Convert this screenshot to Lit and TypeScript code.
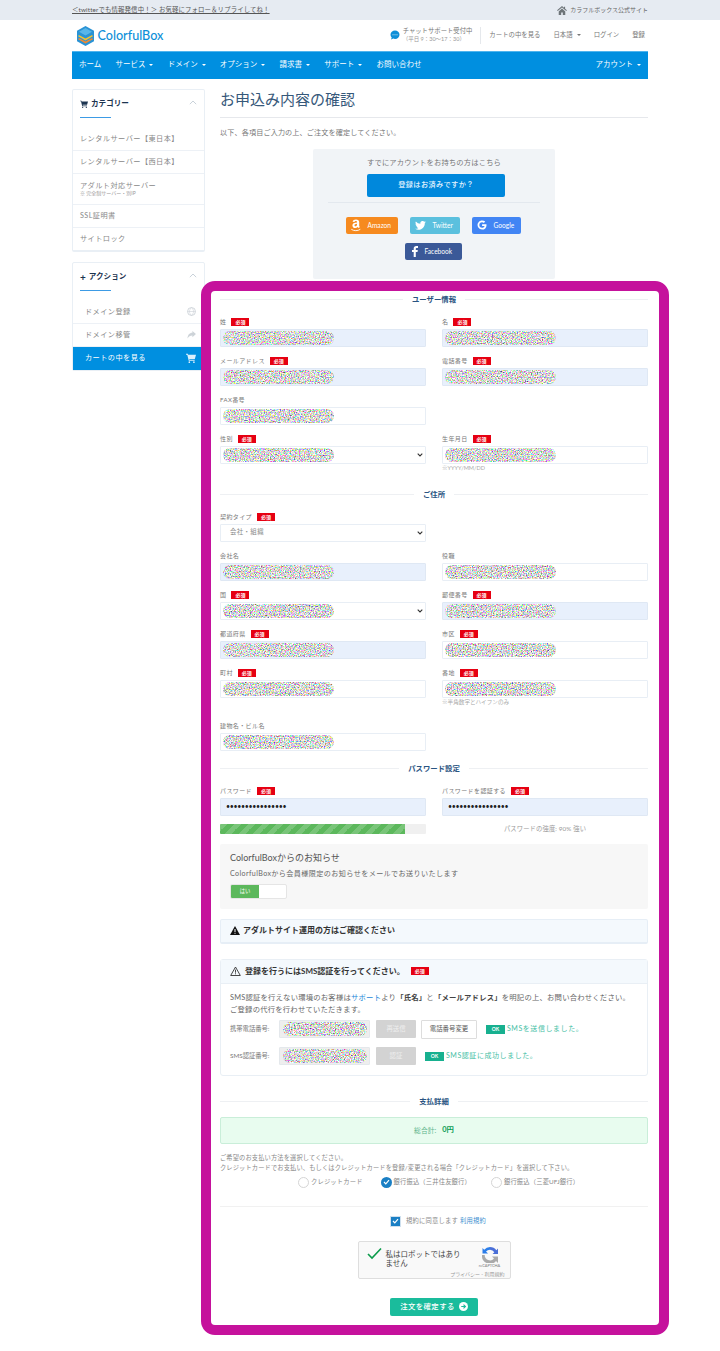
import { LitElement, html, css } from "lit";
import { customElement } from "lit/decorators.js";

const blob = (w = 111, h = 14, seed = 1) => html`<svg class="blob" width=${w} height=${h} viewBox="0 0 ${w} ${h}" aria-hidden="true">
  <defs><filter id="nz${seed}" x="0" y="0" width="100%" height="100%" color-interpolation-filters="sRGB">
    <feTurbulence type="fractalNoise" baseFrequency="0.8" numOctaves="2" seed=${seed} result="n"></feTurbulence>
    <feColorMatrix in="n" type="matrix" values="1.9 0 0 0 -0.1  0 1.9 0 0 -0.1  0 0 1.9 0 -0.1  0 0 0 0 1"></feColorMatrix>
    <feGaussianBlur stdDeviation="0.4"></feGaussianBlur>
    <feComposite in2="SourceAlpha" operator="in"></feComposite>
  </filter></defs>
  <rect width=${w} height=${h} rx=${h / 2} fill="#000" filter="url(#nz${seed})"></rect>
</svg>`;

const chev = html`<svg class="chev" width="6" height="4" viewBox="0 0 6 4"><path d="M.7.7 3 3 5.3.7" fill="none" stroke="#333" stroke-width="1.1"/></svg>`;
const cart = (c: string, s = 9) => html`<svg width=${s} height=${s} viewBox="0 0 12 12"><path fill=${c} d="M0 1h2.2l.4 1.2H12l-1.4 5H3.9l.3 1H10.4v1H3.3L1.5 2H0zM4 10a1 1 0 1 1 0 2 1 1 0 0 1 0-2zm5.500 0a1 1 0 1 1 0 2 1 1 0 0 1 0-2z"/></svg>`;
const up = html`<svg class="up" width="8" height="5" viewBox="0 0 8 5"><path d="M.8 4.200 4 1l3.200 3.200" fill="none" stroke="#c9d2da" stroke-width="1"/></svg>`;

let seedN = 0;
type F = { label?: string; req?: boolean; bg?: "blue" | "white"; select?: boolean; text?: string; help?: string; tall?: boolean; dots?: boolean };
const field = (f: F) => html`<div class="field">
  <div class="lab"><span>${f.label}</span>${f.req ? html`<b class="req">必須</b>` : ""}</div>
  <div class="inp ${f.bg === "blue" ? "blue" : ""}">
    ${f.dots ? html`<span class="dots">••••••••••••••••</span>` : f.text ? html`<span class="seltext">${f.text}</span>` : blob(111, 14, ++seedN)}
    ${f.select ? chev : ""}
  </div>
  ${f.help ? html`<div class="help ${f.tall ? "tall" : ""}">${f.help}</div>` : ""}
</div>`;

@customElement("app-root")
export class AppRoot extends LitElement {
  static styles = css`
    :host { display: block; width: 720px; min-height: 1351px; position: relative; background: #fff; overflow: hidden;
      font-family: Lato, "Noto Sans CJK JP", sans-serif; color: #777; font-size: 7.5px; line-height: 1.3; }
    a { color: inherit; text-decoration: none; }
    .top { height: 20px; background: #e6ebf2; }
    .wrap { width: 576px; margin: 0 auto; }
    .top .wrap { height: 20px; display: flex; justify-content: space-between; align-items: center; }
    .tw { color: #555; font-size: 6.4px; text-decoration: underline; letter-spacing: .02em; }
    .off { display: flex; align-items: center; gap: 3px; font-size: 6px; color: #666; }
    .head { height: 30px; display: flex; align-items: center; position: relative; }
    .logo { display: flex; align-items: center; gap: 3.5px; margin-left: 5px; color: #0d8fd8; font-size: 12.6px; font-weight: 500; font-family: Lato, sans-serif; padding-top: 2px; }
    .hr { margin-left: auto; display: flex; align-items: center; color: #777; font-size: 6.4px; }
    .chat { display: flex; gap: 3px; align-items: center; }
    .chat small { display: block; font-size: 5.5px; color: #999; }
    .chat div { font-size: 6.35px; line-height: 8px; }
    .vline { width: 1px; height: 17px; background: #e5e8ec; margin: 0 8px; }
    .hl { margin-right: 13px; display: flex; align-items: center; gap: 2px; }
    .hl:last-child { margin-right: 3px; }
    .tri { width: 0; height: 0; border-left: 2px solid transparent; border-right: 2px solid transparent; border-top: 2.5px solid currentColor; margin-left: 2px; display: inline-block; }
    nav { height: 27.5px; margin-top: 1px; background: #008fe0; border-top: 1px solid #4fb4ee; box-sizing: border-box; color: #fff; display: flex; align-items: center; padding: 0 7px; font-size: 7.5px; }
    nav a { margin-right: 14.2px; display: flex; align-items: center; gap: 2px; }
    nav .acct { margin: 0 0 0 auto; }
    .main { display: flex; gap: 15px; padding-top: 10px; align-items: flex-start; }
    aside { width: 133px; flex: none; }
    .card { border: 1px solid #e9eff5; border-bottom-width: 2px; border-radius: 2px; background: #fff; margin-bottom: 10px; box-sizing: border-box; }
    .card h3 { margin: 0; height: 27px; padding: 1px 7px 0; box-sizing: border-box; font-size: 7.6px; font-weight: 700; color: #1c3450; display: flex; align-items: center; gap: 3px; position: relative; }
    .card h3 .up { position: absolute; right: 7px; top: 10px; }
    .plus { font-size: 10px; line-height: 10px; }
    .uline { width: 31px; height: 1px; background: #3d9be5; margin-left: 7px; }
    .items { margin-top: 10px; }
    .it { padding: 0 7px; height: 23px; display: flex; align-items: center; border-bottom: 1px solid #edf1f6; box-sizing: border-box; letter-spacing: .06em; color: #888; font-size: 7.2px; }
    .it:last-child { border-bottom: 0; height: 22px; }
    .it.tall { height: 31px; flex-direction: column; align-items: flex-start; justify-content: center; }
    .it.tall small { font-size: 5px; color: #999; letter-spacing: 0; }
    .acts { border-bottom-width: 1px; }
    .acts .it { justify-content: space-between; padding: 0 8px 0 12px; }
    .acts .it.on { background: #008fe0; color: #fff; height: 23px; border: 0; }
    .content { flex: 1; min-width: 0; }
    h1 { margin: 0; font-weight: 400; font-size: 15px; line-height: 20px; height: 29px; box-sizing: border-box; color: #36587a; border-bottom: 1px solid #e6e8ec; }
    .lead { margin-top: 9px; height: 11px; line-height: 11px; font-size: 7.1px; color: #777; letter-spacing: .02em; }
    .login { margin: 11px auto 0; width: 242px; height: 130px; background: #f1f4f7; border-radius: 2px; display: flex; flex-direction: column; align-items: center; padding-top: 8px; box-sizing: border-box; }
    .login p { margin: 0; font-size: 7.3px; height: 11px; line-height: 11px; color: #777; letter-spacing: .02em; }
    .bluebtn { margin: 6px 0 0 4px; width: 138px; height: 23px; background: #0088dc; border-radius: 2px; color: #e6f4ff; font-size: 7.2px; display: flex; align-items: center; justify-content: center; font-weight: 500; letter-spacing: .05em; }
    .login hr { width: 212px; border: 0; height: 1px; background: #e3e8ee; margin: 5px 0 0; }
    .soc { display: flex; gap: 12px; margin: 14px 0 0 -2px; justify-content: center; }
    .soc + .soc { margin-top: 9px; }
    .sb { height: 17px; border-radius: 2px; color: #fff; font-size: 6.6px; display: flex; align-items: center; box-sizing: border-box; padding-left: 5px; gap: 7px; }
    .amz { width: 52px; background: #f68a1f; } .twt { width: 50px; background: #5bc0de; } .goo { width: 49px; background: #4285f4; } .fb { width: 57px; background: #3b5998; padding-left: 7px; }
    .sec { display: flex; align-items: center; gap: 9px; height: 12px; font-size: 7.4px; font-weight: 700; color: #2a5482; margin-top: 15px; }
    .sec::before, .sec::after { content: ""; flex: 1; height: 1px; background: #eef0f3; }
    .m17 { margin-top: 17px; } .m12 { margin-top: 12px; } .m20 { margin-top: 20px; }
    .grid { display: grid; grid-template-columns: 206px 206px; column-gap: 16px; row-gap: 10px; margin-top: 12px; }
    .lab { height: 11px; display: flex; align-items: flex-start; gap: 5px; font-size: 6px; letter-spacing: .4px; color: #777; line-height: 8px; }
    .req { display: inline-flex; align-items: center; justify-content: center; width: 18px; height: 8px; background: #e60012; color: #fff; font-size: 5px; font-weight: 700; letter-spacing: 0; }
    .inp { height: 18px; border: 1px solid #e8eef5; border-radius: 1px; box-sizing: border-box; padding-left: 2px; display: flex; align-items: center; justify-content: space-between; background: #fff; }
    .inp.blue { background: #e8f0fc; border-color: #dfe8f4; }
    .blob { display: block; flex: none; }
    .chev { margin-right: 2px; }
    .dots { color: #222; font-size: 7px; letter-spacing: -.3px; margin-left: 3px; }
    .seltext { margin-left: 7px; font-size: 6.4px; color: #888; letter-spacing: .4px; }
    .help { height: 8px; line-height: 8px; font-size: 5.6px; color: #aaa; }
    .help.tall { height: 14px; }
    .bar { display: grid; grid-template-columns: 206px 206px; column-gap: 16px; margin-top: 8px; height: 10px; }
    .track { background: #f0f0f0; border-radius: 1px; overflow: hidden; }
    .fill { width: 90%; height: 100%; background-color: #5cb85c; background-image: linear-gradient(135deg, rgba(255,255,255,.18) 25%, transparent 25%, transparent 50%, rgba(255,255,255,.18) 50%, rgba(255,255,255,.18) 75%, transparent 75%); background-size: 14px 14px; }
    .strength { text-align: center; font-size: 6.3px; line-height: 10px; color: #999; letter-spacing: .02em; }
    .notice { margin-top: 10px; height: 65px; background: #f7f7f7; padding: 8px 10px 0; box-sizing: border-box; border-radius: 2px; }
    .notice h4 { margin: 0; font-size: 9px; line-height: 11px; font-weight: 400; color: #555; }
    .notice p { margin: 5px 0 0; font-size: 7.1px; line-height: 11px; color: #666; letter-spacing: .4px; }
    .tog { margin-top: 5px; width: 57px; height: 15px; border: 1px solid #e5e5e5; box-sizing: border-box; border-radius: 2px; background: #fff; overflow: hidden; }
    .tog span { display: flex; width: 28px; height: 100%; background: #5cb85c; color: #fff; font-size: 5.3px; align-items: center; justify-content: center; }
    .alert { margin-top: 10px; height: 25px; background: #f4f9fd; border: 1px solid #e6eef6; border-bottom-width: 2px; box-sizing: border-box; display: flex; align-items: center; gap: 3px; padding-left: 9px; font-size: 8px; font-weight: 700; color: #333; border-radius: 2px; }
    .sms { margin-top: 15px; height: 117px; border: 1px solid #e9eff5; border-radius: 3px; box-sizing: border-box; }
    .smsh { height: 24px; background: #f4f9fd; border-bottom: 1px solid #e9eff5; display: flex; align-items: center; gap: 4px; padding-left: 9px; font-size: 8px; font-weight: 700; color: #333; box-sizing: border-box; }
    .smsh .req { margin-left: 2px; }
    .smsb { padding: 8px 9px 0; }
    .smsb p { margin: 0; font-size: 7.35px; line-height: 12px; color: #666; letter-spacing: .2px; }
    .smsb p a { color: #1d87d8; }
    .smsb p b { color: #444; }
    .srow { display: flex; align-items: center; height: 19px; margin-top: 4px; }
    .srow + .srow { margin-top: 8px; }
    .srow > label { width: 49px; font-size: 6.3px; color: #777; flex: none; }
    .gi { width: 91px; height: 18px; background: #eee; border: 1px solid #e4e8ec; border-radius: 1px; box-sizing: border-box; display: flex; align-items: center; justify-content: center; margin-right: 6px; flex: none; }
    .gb { width: 40px; height: 18px; background: #d3d3d3; color: #eee; font-size: 6.4px; display: flex; align-items: center; justify-content: center; border-radius: 1px; flex: none; }
    .wb { width: 56px; height: 19px; background: #fff; border: 1px solid #ddd; box-sizing: border-box; color: #555; font-size: 6.4px; display: flex; align-items: center; justify-content: center; margin-left: 5px; border-radius: 1px; flex: none; }
    .ok { width: 19px; height: 9px; background: #17b08f; color: #fff; font-size: 5px; font-weight: 700; display: flex; align-items: center; justify-content: center; margin-left: 9px; margin-right: 2px; flex: none; }
    .oktxt { color: #45c0a5; font-size: 7px; letter-spacing: .08em; white-space: nowrap; }
    .green { margin-top: 9px; height: 27px; background: #e8fcef; border: 1px solid #c9eed9; border-radius: 2px; box-sizing: border-box; display: flex; align-items: center; justify-content: center; gap: 6px; font-size: 6.8px; color: #5db58b; }
    .green b { color: #0e9c55; font-size: 7.4px; }
    .pay { margin-top: 9px; font-size: 6.25px; line-height: 10px; color: #888; letter-spacing: .02em; }
    .radios { margin-top: 3px; height: 13px; display: flex; align-items: center; font-size: 6.3px; color: #888; letter-spacing: .15px; padding-left: 78px; }
    .radio { width: 11px; height: 11px; border-radius: 50%; border: 1px solid #d5d5d5; box-sizing: border-box; margin-right: 2px; background: #fff; flex: none; }
    .radio.on { background: #1a7fc4; border: 0; display: flex; align-items: center; justify-content: center; }
    .r2 { margin-left: 18px; } .r3 { margin-left: 20px; }
    .sep { height: 1px; background: #f1f1f1; margin-top: 17px; }
    .agree { margin-top: 9px; height: 11px; display: flex; align-items: center; justify-content: center; gap: 5px; font-size: 6.3px; color: #888; letter-spacing: .2px; padding-left: 8px; }
    .agree a { color: #3b8fd0; }
    .cb { width: 11px; height: 11px; background: #1a7fc4; border: 1px solid #cfe0ee; box-sizing: border-box; display: flex; align-items: center; justify-content: center; }
    .cap { margin: 14px auto 0; width: 153px; height: 38px; background: #f9f9f9; border: 1px solid #dedede; border-radius: 2px; box-sizing: border-box; display: flex; position: relative; padding: 5px 0 0 8px; }
    .cap .msg { margin-left: 4px; width: 76px; font-size: 7.5px; line-height: 9px; color: #444; padding-top: 3px; }
    .cap .logo2 { position: absolute; right: 5px; top: 5px; display: flex; flex-direction: column; align-items: center; font-size: 3.9px; color: #777; line-height: 5px; width: 30px; }
    .cap .priv { position: absolute; right: 5px; bottom: 1px; font-size: 5px; color: #999; line-height: 6px; white-space: nowrap; }
    .go { margin: 19px auto 0; width: 88px; height: 18px; background: #1abc9c; color: #fff; border-radius: 2px; display: flex; align-items: center; justify-content: center; gap: 4px; font-size: 7.4px; letter-spacing: .05em; font-weight: 500; }
    .frame { position: absolute; left: 201px; top: 281px; width: 468px; height: 1054px; box-sizing: border-box; border: 10px solid #c5129c; border-radius: 14px; pointer-events: none; }
  `;

  render() {
    seedN = 0;
    const f = field;
    const tick = html`<svg width="7" height="6" viewBox="0 0 7 6"><path d="M1 3l1.800 1.800L6 1.200" fill="none" stroke="#fff" stroke-width="1.200"/></svg>`;
    return html`
      <div class="top"><div class="wrap">
        <a class="tw">＜twitterでも情報発信中！＞ お気軽にフォロー＆リプライしてね！</a>
        <span class="off"><svg width="10" height="9" viewBox="0 0 12 11"><path fill="#6d7478" d="M6 0 0 5.300l.8.9L6 1.700l5.200 4.500.8-.9L9.800 3.400V.8H8.400v1.400zM2 6.600V11h3V8h2v3h3V6.600L6 3z"/></svg>カラフルボックス公式サイト</span>
      </div></div>
      <div class="wrap">
        <header class="head">
          <div class="logo">
            <svg width="17" height="20" viewBox="0 0 17 20"><path fill="#2a93d5" d="M8.500 0 17 4.800v10.400L8.500 20 0 15.200V4.800z"/><path fill="#58b6e8" d="M8.500 2 15 5.800 8.500 9.500 2 5.800z"/><path fill="none" stroke="#f2c230" stroke-width="1.600" d="M1.500 9.600 8.500 13.500l7-3.900"/><path fill="none" stroke="#f28a30" stroke-width="1.600" d="M1.500 12.600l7 3.900 7-3.900"/></svg>
            ColorfulBox
          </div>
          <div class="hr">
            <div class="chat"><svg width="10" height="10" viewBox="0 0 10 10"><path fill="#0d8fd8" d="M5 .5a4.500 4.200 0 0 1 0 8.400c-.6 0-1.200-.1-1.700-.3L1 9.600l.7-2A4.200 4.200 0 0 1 .5 4.700 4.500 4.200 0 0 1 5 .5z"/><circle cx="3" cy="4.700" r=".5" fill="#fff"/><circle cx="5" cy="4.700" r=".5" fill="#fff"/><circle cx="7" cy="4.700" r=".5" fill="#fff"/></svg>
              <div>チャットサポート受付中<small>（平日 9：30～17：30）</small></div></div>
            <span class="vline"></span>
            <a class="hl">カートの中を見る</a><a class="hl">日本語<i class="tri"></i></a><a class="hl">ログイン</a><a class="hl">登録</a>
          </div>
        </header>
        <nav>
          <a>ホーム</a><a>サービス<i class="tri"></i></a><a>ドメイン<i class="tri"></i></a><a>オプション<i class="tri"></i></a><a>請求書<i class="tri"></i></a><a>サポート<i class="tri"></i></a><a>お問い合わせ</a>
          <a class="acct">アカウント<i class="tri"></i></a>
        </nav>
        <div class="main">
          <aside>
            <section class="card">
              <h3>${cart("#1c3450", 8)}<span>カテゴリー</span>${up}</h3>
              <div class="uline"></div>
              <div class="items">
                <div class="it">レンタルサーバー【東日本】</div>
                <div class="it">レンタルサーバー【西日本】</div>
                <div class="it tall">アダルト対応サーバー<small>※ 完全制サーバー・別IP</small></div>
                <div class="it">SSL証明書</div>
                <div class="it">サイトロック</div>
              </div>
            </section>
            <section class="card acts">
              <h3><span class="plus">+</span><span>アクション</span>${up}</h3>
              <div class="uline"></div>
              <div class="items">
                <div class="it">ドメイン登録<svg width="9" height="9" viewBox="0 0 10 10"><circle cx="5" cy="5" r="4.400" fill="none" stroke="#cdd3d8"/><path d="M.6 5h8.800M5 .6c-3 3-3 5.800 0 8.800M5 .6c3 3 3 5.800 0 8.800" fill="none" stroke="#cdd3d8" stroke-width=".7"/></svg></div>
                <div class="it">ドメイン移管<svg width="9" height="8" viewBox="0 0 10 9"><path fill="#cdd3d8" d="M6 0l4 3.500L6 7V5C3.500 5 1.700 6 .5 8.500.6 4.700 2.600 2 6 2z"/></svg></div>
                <div class="it on">カートの中を見る${cart("#dbeffc", 10)}</div>
              </div>
            </section>
          </aside>
          <div class="content">
            <h1>お申込み内容の確認</h1>
            <div class="lead">以下、各項目ご入力の上、ご注文を確定してください。</div>
            <div class="login">
              <p>すでにアカウントをお持ちの方はこちら</p>
              <a class="bluebtn">登録はお済みですか？</a>
              <hr />
              <div class="soc">
                <a class="sb amz"><svg width="10" height="13" viewBox="0 0 10 13"><path fill="#fff" d="M5 .5c2 0 3.200.9 3.200 2.600v3.600c0 .6.3.9.7 1.200L7.700 9c-.5-.4-.8-.7-1-1.100C6 8.700 5.200 9 4.300 9 2.700 9 1.400 8.100 1.400 6.400 1.400 4.500 3 3.700 6 3.500v-.3C6 2.400 5.600 2 4.800 2c-.7 0-1.200.4-1.400 1l-1.800-.2C1.900 1.300 3.200.5 5 .5zm1 4.300c-1.500.1-2.500.5-2.500 1.500 0 .7.400 1 1 1 .8 0 1.500-.6 1.500-1.500z"/><path fill="none" stroke="#fff" stroke-width=".9" d="M.3 10.300c2.600 1.800 6.400 1.800 9 0"/></svg>Amazon</a>
                <a class="sb twt"><svg width="11" height="9" viewBox="0 0 24 20"><path fill="#fff" d="M24 2.400a10 10 0 0 1-2.800.8A5 5 0 0 0 23.300.5a10 10 0 0 1-3.100 1.200 4.900 4.900 0 0 0-8.400 4.500A14 14 0 0 1 1.700.9a4.900 4.900 0 0 0 1.500 6.600c-.8 0-1.600-.2-2.200-.6 0 2.400 1.700 4.400 3.900 4.900-.7.200-1.500.2-2.200.1.600 2 2.400 3.400 4.600 3.400A9.900 9.900 0 0 1 0 17.300 14 14 0 0 0 7.500 19.500c9.100 0 14.300-7.700 14-14.600A10 10 0 0 0 24 2.400z"/></svg>Twitter</a>
                <a class="sb goo"><svg width="10" height="10" viewBox="0 0 24 24"><path fill="#fff" d="M12.200 10v4.300h6c-.6 2.700-2.900 4.300-6 4.300a6.600 6.600 0 0 1 0-13.200c1.700 0 3.200.6 4.300 1.600l3.200-3.200A11 11 0 1 0 12.200 23c6.300 0 10.600-4.400 10.600-10.700 0-.8-.1-1.600-.2-2.300z"/></svg>Google</a>
              </div>
              <div class="soc"><a class="sb fb"><svg width="6" height="11" viewBox="0 0 6 11"><path fill="#fff" d="M1.700 11V6.100H0V4.100h1.700V2.700C1.700 1 2.700 0 4.300 0H6v2H4.800c-.7 0-1 .4-1 1v1.100h2l-.3 2H3.800V11z"/></svg>Facebook</a></div>
            </div>

            <div class="sec">ユーザー情報</div>
            <div class="grid">
              ${f({ label: "姓", req: true, bg: "blue" })}${f({ label: "名", req: true, bg: "blue" })}
              ${f({ label: "メールアドレス", req: true, bg: "blue" })}${f({ label: "電話番号", req: true, bg: "blue" })}
              ${f({ label: "FAX番号" })}<div></div>
              ${f({ label: "性別", req: true, select: true })}${f({ label: "生年月日", req: true, help: "※YYYY/MM/DD" })}
            </div>
            <div class="sec m17">ご住所</div>
            <div class="grid">
              ${f({ label: "契約タイプ", req: true, select: true, text: "会社・組織" })}<div></div>
              ${f({ label: "会社名", bg: "blue" })}${f({ label: "役職" })}
              ${f({ label: "国", req: true, select: true })}${f({ label: "郵便番号", req: true, bg: "blue" })}
              ${f({ label: "都道府県", req: true, bg: "blue" })}${f({ label: "市区", req: true })}
              ${f({ label: "町村", req: true })}${f({ label: "番地", req: true, help: "※半角数字とハイフンのみ", tall: true })}
              ${f({ label: "建物名・ビル名" })}<div></div>
            </div>
            <div class="sec m12">パスワード設定</div>
            <div class="grid">
              ${f({ label: "パスワード", req: true, bg: "blue", dots: true })}${f({ label: "パスワードを認証する", req: true, bg: "blue", dots: true })}
            </div>
            <div class="bar"><div class="track"><div class="fill"></div></div><div class="strength">パスワードの強度: 90% 強い</div></div>
            <div class="notice">
              <h4>ColorfulBoxからのお知らせ</h4>
              <p>ColorfulBoxから会員様限定のお知らせをメールでお送りいたします</p>
              <div class="tog"><span>はい</span></div>
            </div>
            <div class="alert"><svg width="10" height="9" viewBox="0 0 10 9"><path fill="#111" d="M5 0l5 9H0z"/><path stroke="#fff" d="M5 3v3M5 6.800v1"/></svg>アダルトサイト運用の方はご確認ください</div>
            <div class="sms">
              <div class="smsh"><svg width="11" height="10" viewBox="0 0 11 10"><path fill="none" stroke="#333" stroke-width=".9" d="M5.500 1 10.300 9.500H.7z"/><path stroke="#333" stroke-width=".9" d="M5.500 3.700v3M5.500 7.300v1"/></svg>登録を行うにはSMS認証を行ってください。<b class="req">必須</b></div>
              <div class="smsb">
                <p>SMS認証を行えない環境のお客様は<a>サポート</a>より<b>「氏名」</b>と<b>「メールアドレス」</b>を明記の上、お問い合わせください。<br />ご登録の代行を行わせていただきます。</p>
                <div class="srow"><label>携帯電話番号:</label><div class="gi">${blob(84, 14, 90)}</div><div class="gb">再送信</div><div class="wb">電話番号変更</div><span class="ok">OK</span><span class="oktxt">SMSを送信しました。</span></div>
                <div class="srow"><label>SMS認証番号:</label><div class="gi">${blob(84, 14, 91)}</div><div class="gb">認証</div><span class="ok">OK</span><span class="oktxt">SMS認証に成功しました。</span></div>
              </div>
            </div>
            <div class="sec m20">支払詳細</div>
            <div class="green"><span>総合計:</span><b>0円</b></div>
            <div class="pay">ご希望のお支払い方法を選択してください。<br />クレジットカードでお支払い、もしくはクレジットカードを登録/変更される場合「クレジットカード」を選択して下さい。</div>
            <div class="radios">
              <span class="radio"></span>クレジットカード
              <span class="radio on r2">${tick}</span>銀行振込（三井住友銀行）
              <span class="radio r3"></span>銀行振込（三菱UFJ銀行）
            </div>
            <div class="sep"></div>
            <div class="agree"><span class="cb">${tick}</span><span>規約に同意します <a>利用規約</a></span></div>
            <div class="cap">
              <svg width="15" height="13" viewBox="0 0 15 13"><path d="M1 7l4 4L14 1.500" fill="none" stroke="#0a9b4a" stroke-width="1.600"/></svg>
              <div class="msg">私はロボットではありません</div>
              <div class="logo2"><svg width="16" height="16" viewBox="0 0 16 16"><path fill="#4a6fd8" d="M8 0a8 8 0 0 1 6.400 3.200L16 1.600V7H10.600l1.700-1.700A5.300 5.300 0 0 0 8 2.700z"/><path fill="#2b7de9" d="M8 0v2.700A5.300 5.300 0 0 0 4 4.500L6 6.500H.5V1l1.700 1.700A8 8 0 0 1 8 0z"/><path fill="#aaa" d="M0 8h2.700A5.300 5.300 0 0 0 12 11.500L10 9.500h6V16l-2-2A8 8 0 0 1 0 8z"/></svg>reCAPTCHA</div>
              <div class="priv">プライバシー - 利用規約</div>
            </div>
            <a class="go">注文を確定する<svg width="9" height="9" viewBox="0 0 10 10"><circle cx="5" cy="5" r="5" fill="#fff"/><path d="M2.500 5h4.500M5 2.800 7.200 5 5 7.200" fill="none" stroke="#1abc9c" stroke-width="1.200"/></svg></a>
          </div>
        </div>
      </div>
      <div class="frame"></div>
    `;
  }
}
